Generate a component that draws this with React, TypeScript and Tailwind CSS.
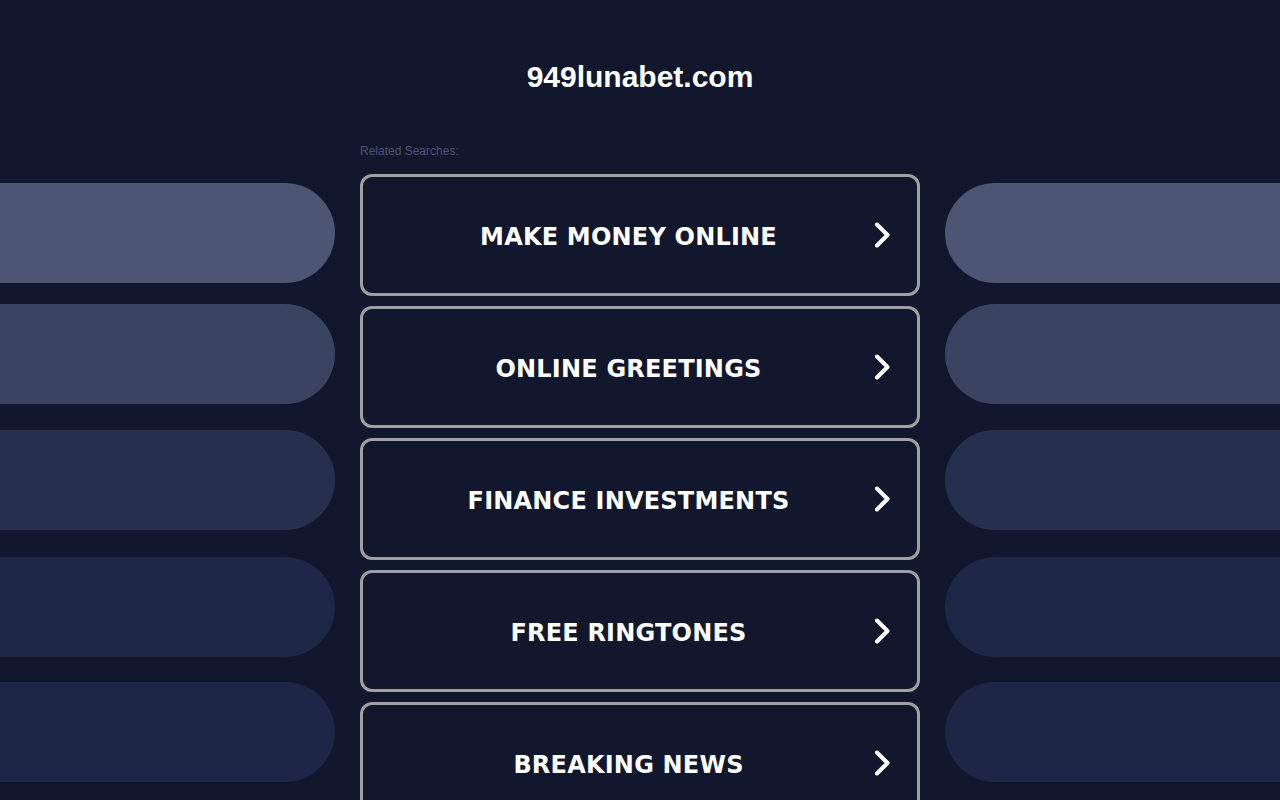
const searches = ['MAKE MONEY ONLINE', 'ONLINE GREETINGS', 'FINANCE INVESTMENTS', 'FREE RINGTONES', 'BREAKING NEWS'];

const pills = [
  { color: 'bg-[#4c5673]', mt: 'mt-0' },
  { color: 'bg-[#3a4461]', mt: 'mt-[21px]' },
  { color: 'bg-[#272f4f]', mt: 'mt-[26px]' },
  { color: 'bg-[#1f2748]', mt: 'mt-[27px]' },
  { color: 'bg-[#1e2648]', mt: 'mt-[25px]' },
];

function Chevron() {
  return (
    <svg width="16" height="26" viewBox="0 0 16 26" className="shrink-0">
      <path d="M3 2.5 L13.5 13 L3 23.5" fill="none" stroke="white" strokeWidth="4" strokeLinecap="round" strokeLinejoin="round" />
    </svg>
  );
}

export default function App() {
  return (
    <div className="w-[1280px] h-[800px] overflow-hidden bg-[#11172d] font-['Liberation_Sans',Arial,sans-serif]">
      <div className="h-[140px] pt-[59px] text-center">
        <h1 className="text-[30px] leading-[36px] font-bold text-white">949lunabet.com</h1>
      </div>

      <div className="flex gap-[25px]">
        <div className="w-[335px] shrink-0 flex flex-col pt-[43px]">
          {pills.map((p, i) => (
            <div key={i} className={`h-[100px] rounded-r-[50px] ${p.color} ${p.mt}`} />
          ))}
        </div>

        <div className="w-[560px] shrink-0">
          <p className="h-[16px] mt-[3px] text-[12px] leading-[16px] text-[#4b5573]">Related Searches:</p>
          <div className="mt-[15px] flex flex-col gap-[10px]">
            {searches.map((s) => (
              <a
                key={s}
                href="#"
                className="flex items-center h-[122px] border-[3px] border-[#a0a0a0] rounded-[12px] pl-[20px] pr-[27px]"
              >
                <span className="flex-1 pt-[3px] text-center text-white text-[24px] font-bold tracking-[0.2px] font-['DejaVu_Sans',Verdana,sans-serif]">
                  {s}
                </span>
                <Chevron />
              </a>
            ))}
          </div>
        </div>

        <div className="w-[335px] shrink-0 flex flex-col pt-[43px]">
          {pills.map((p, i) => (
            <div key={i} className={`h-[100px] rounded-l-[50px] ${p.color} ${p.mt}`} />
          ))}
        </div>
      </div>
    </div>
  );
}
